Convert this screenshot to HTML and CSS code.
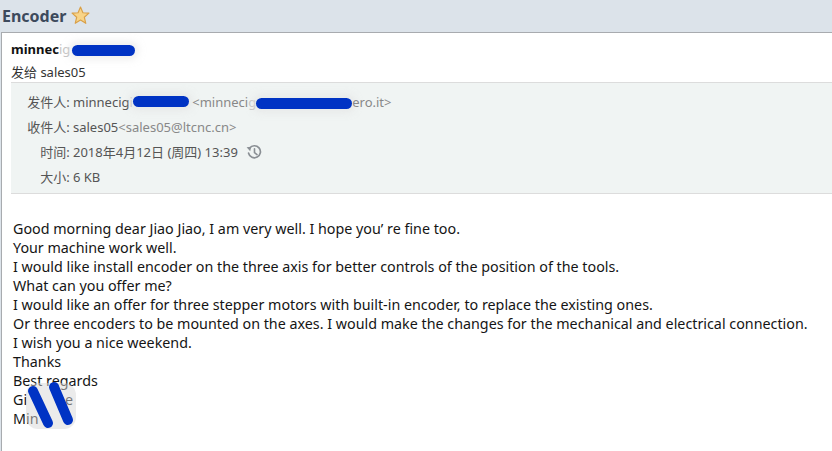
FILE: index.html
```html
<!DOCTYPE html>
<html lang="zh-CN">
<head>
    <meta charset="UTF-8">
    <title>Encoder</title>
    <link rel="stylesheet" href="styles.css">
</head>
<body>
    <div class="title-bar">
        <h1 class="subject">Encoder</h1>
        <svg class="star" width="19" height="19" viewBox="0 0 18 18">
            <polygon points="9,1 11.3,6.4 17,6.8 12.6,10.6 14,16.4 9,13.3 4,16.4 5.4,10.6 1,6.8 6.7,6.4" fill="#f8d488" stroke="#d9a048" stroke-width="1.1" stroke-linejoin="round"/>
        </svg>
    </div>

    <div class="mail">
        <div class="sender">
            <div class="sender-name">minnec<span class="faded">ig</span><span class="blob blob-name"></span></div>
            <div class="sent-to">发给 sales05</div>
        </div>

        <div class="meta">
            <div class="meta-row">
                <span class="label">发件人:&nbsp;</span>
                <span class="value">minnecig<span class="faded">i</span><span class="blob blob-from"></span>&nbsp;<span class="addr">&lt;minneci<span class="faded">g</span><span class="blob blob-addr"></span>ero.it&gt;</span></span>
            </div>
            <div class="meta-row">
                <span class="label">收件人:&nbsp;</span>
                <span class="value">sales05<span class="addr">&lt;sales05@ltcnc.cn&gt;</span></span>
            </div>
            <div class="meta-row">
                <span class="label">时间:&nbsp;</span>
                <span class="value">2018年4月12日 (周四) 13:39<svg class="history" width="18" height="18" viewBox="0 0 18 18">
                        <path d="M3.6 10.2 A6 6 0 1 0 4.6 5.2" fill="none" stroke="#8a8f94" stroke-width="1.7" stroke-linecap="round"/>
                        <polygon points="1.6,4.2 6.2,3.8 5.2,8.2" fill="#8a8f94"/>
                        <path d="M9.5 5.8 V9.6 L12 11.6" fill="none" stroke="#8a8f94" stroke-width="1.6" stroke-linecap="round"/>
                    </svg></span>
            </div>
            <div class="meta-row">
                <span class="label">大小:&nbsp;</span>
                <span class="value">6 KB</span>
            </div>
        </div>

        <div class="body">
            <p>Good morning dear Jiao Jiao, I am very well. I hope you’ re fine too.</p>
            <p>Your machine work well.</p>
            <p>I would like install encoder on the three axis for better controls of the position of the tools.</p>
            <p>What can you offer me?</p>
            <p>I would like an offer for three stepper motors with built-in encoder, to replace the existing ones.</p>
            <p>Or three encoders to be mounted on the axes. I would make the changes for the mechanical and electrical connection.</p>
            <p>I wish you a nice weekend.</p>
            <p>Thanks</p>
            <p>Best regards</p>
            <p>Gi<span class="gap"></span>e</p>
            <p>Min</p>
            <svg class="scribble" width="60" height="56" viewBox="0 0 60 56">
                <rect x="4" y="4" width="50" height="46" rx="12" fill="#d8d8d8" opacity="0.5"/>
                <path d="M11 12 L26 44" stroke="#0033c4" stroke-width="10" stroke-linecap="round"/>
                <path d="M32 8 L46 41" stroke="#0033c4" stroke-width="10" stroke-linecap="round"/>
            </svg>
        </div>
    </div>
</body>
</html>
```

FILE: styles.css
```css
body {
    margin: 0;
    width: 832px;
    height: 451px;
    overflow: hidden;
    background-color: #dce3ea;
    font-family: "Noto Sans", "Noto Sans CJK SC", sans-serif;
}

.title-bar {
    height: 32px;
    display: flex;
    align-items: center;
    padding-left: 2px;
    gap: 5px;
}

.subject {
    margin: 0;
    font-size: 16px;
    font-weight: bold;
    color: #3d4a5c;
    line-height: 1;
}

.star {
    margin-top: -1px;
}

.mail {
    margin-left: 1px;
    height: 419px;
    background-color: white;
    border-top: 1px solid #a8abaf;
    border-left: 1px solid #a8abaf;
}

.sender {
    padding: 6px 0 0 9px;
    height: 43px;
}

.sender-name {
    font-size: 13px;
    font-weight: bold;
    color: #111;
    line-height: 20px;
}

.sent-to {
    font-size: 13px;
    color: #333;
    line-height: 20px;
    margin-top: 3px;
}

.faded {
    color: #c4c4c4;
    font-weight: normal;
}

.blob {
    display: inline-block;
    vertical-align: middle;
    background-color: #0033c4;
    border-radius: 6px;
    box-shadow: 0 0 6px 4px rgba(225, 225, 225, 0.5);
}

.blob-name {
    width: 63px;
    height: 11px;
    margin-left: 2px;
}

.blob-from {
    width: 56px;
    height: 11px;
}

.blob-addr {
    width: 96px;
    height: 11px;
}

.meta {
    margin-left: 9px;
    background-color: #f0f4f3;
    border-top: 1px solid #dcdcdc;
    border-bottom: 1px solid #dcdcdc;
    padding: 6px 0 4px;
}

.meta-row {
    display: flex;
    height: 25px;
    align-items: center;
    font-size: 13px;
    color: #555;
}

.label {
    width: 62px;
    text-align: right;
    white-space: nowrap;
}

.value {
    display: flex;
    align-items: center;
    white-space: nowrap;
}

.addr {
    color: #888;
}

.history {
    margin-left: 7px;
}

.body {
    position: relative;
    padding: 25px 0 0 11px;
    font-family: "Noto Sans", sans-serif;
    font-size: 14.3px;
    color: #151515;
}

.body p {
    margin: 0;
    line-height: 19px;
    white-space: nowrap;
}

.gap {
    display: inline-block;
    width: 38px;
}

.scribble {
    position: absolute;
    left: 20px;
    top: 185px;
}
```
